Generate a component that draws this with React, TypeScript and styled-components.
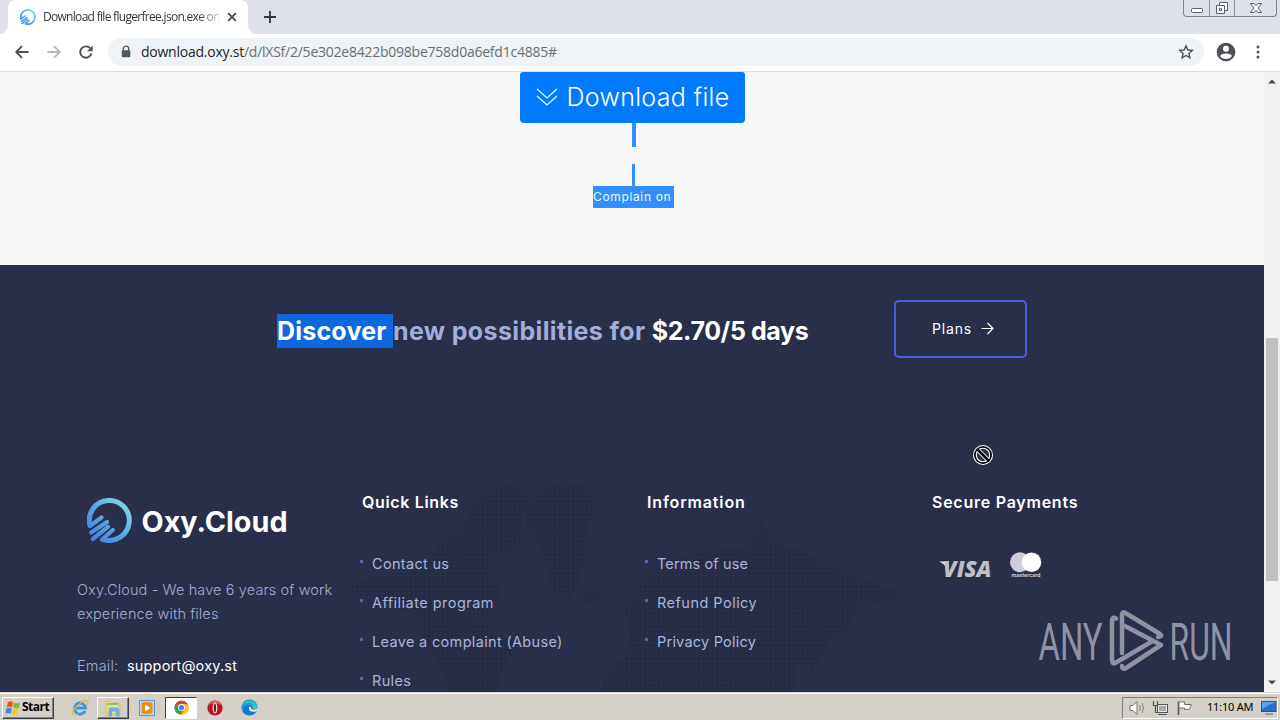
import React from "react";
import styled, { createGlobalStyle } from "styled-components";

const Global = createGlobalStyle`
  * { box-sizing: border-box; }
  body { margin: 0; width: 1280px; height: 720px; overflow: hidden; background: #f8f8f8; }
  svg { display: block; flex: none; }
`;

const brandFont = `Inter, "Liberation Sans", sans-serif`;
const uiFont = `"Open Sans", "Noto Sans", sans-serif`;

const Screen = styled.div`
  position: relative;
  display: flex;
  flex-direction: column;
  width: 1280px;
  height: 720px;
  overflow: hidden;
`;

/* Browser chrome */
const TabStrip = styled.div`
  display: flex;
  justify-content: space-between;
  height: 34px;
  flex: none;
  background: #dee1e8;
`;
const Tab = styled.div`
  position: relative;
  display: flex;
  align-items: center;
  width: 240px;
  height: 34px;
  margin-left: 8px;
  padding: 0 10px 0 12px;
  background: #fff;
  border-radius: 8px 8px 0 0;
  &::before, &::after {
    content: "";
    position: absolute;
    bottom: 0;
    width: 8px;
    height: 8px;
  }
  &::before { left: -8px; background: radial-gradient(circle at 0 0, #dee1e8 7.5px, #fff 8px); }
  &::after { right: -8px; background: radial-gradient(circle at 100% 0, #dee1e8 7.5px, #fff 8px); }
`;
const TabTitle = styled.div`
  width: 176px;
  margin: 0 8px 0 7px;
  overflow: hidden;
  white-space: nowrap;
  font: 12px/20px ${uiFont};
  letter-spacing: -0.7px;
  color: #33373b;
  mask-image: linear-gradient(to right, #000 155px, transparent 182px);
`;
const TabsLeft = styled.div`
  display: flex;
  align-items: center;
  gap: 15px;
`;
const WindowControls = styled.div`
  display: flex;
  width: 94px;
  height: 17px;
  margin-right: 3px;
  border: 1px solid #7d828b;
  border-top: 0;
  border-radius: 0 0 4px 4px;
`;
const Control = styled.div<{ $w: number }>`
  display: flex;
  justify-content: center;
  width: ${(p) => p.$w}px;
  border-right: 1px solid #9297a0;
  &:last-child { border-right: 0; }
`;
const Toolbar = styled.div`
  display: flex;
  align-items: center;
  height: 38px;
  flex: none;
  padding: 0 14px 2px 15px;
  background: #fff;
  border-bottom: 1px solid #dadddd;
`;
const NavButtons = styled.div`
  display: flex;
  gap: 18px;
  margin-right: 15px;
`;
const AddressBar = styled.div`
  display: flex;
  align-items: center;
  width: 1097px;
  height: 28px;
  padding: 0 10px 0 12px;
  border-radius: 14px;
  background: #f0f3f5;
`;
const Url = styled.div`
  flex: 1;
  margin-left: 9px;
  font: 14px/20px ${uiFont};
  letter-spacing: -0.24px;
  color: #6a6f74;
  white-space: nowrap;
  b { font-weight: 400; color: #202326; }
`;
const ToolbarEnd = styled.div`
  display: flex;
  align-items: center;
  gap: 14px;
  margin-left: 12px;
`;

/* Viewport */
const Viewport = styled.div`
  display: flex;
  flex: none;
  height: 620px;
`;
const Page = styled.main`
  display: flex;
  flex-direction: column;
  width: 1264px;
  height: 620px;
  overflow: hidden;
  font-family: ${brandFont};
`;
const Scrollbar = styled.div`
  display: flex;
  flex-direction: column;
  justify-content: space-between;
  align-items: center;
  width: 16px;
  padding: 7px 0;
  background: #f1f1f1;
`;
const Thumb = styled.div`
  width: 12px;
  height: 243px;
  margin-top: 154px;
  background: #c1c1c1;
`;

const DownloadArea = styled.section`
  display: flex;
  flex-direction: column;
  align-items: center;
  height: 193px;
  flex: none;
  background: #f8f8f8;
`;
const DownloadButton = styled.div`
  display: flex;
  align-items: center;
  width: 225px;
  height: 51px;
  padding: 0 0 2px 16px;
  gap: 9px;
  background: #007bff;
  border-radius: 3px 3px 4px 4px;
  color: #fff;
  font-size: 25px;
  font-weight: 300;
  letter-spacing: 0.32px;
  white-space: nowrap;
`;
const SelectionMark = styled.div<{ $h: number; $w: number; $gap?: number }>`
  width: ${(p) => p.$w}px;
  height: ${(p) => p.$h}px;
  margin: 0 0 ${(p) => p.$gap || 0}px 3px;
  background: #338fff;
`;
const Complain = styled.div`
  width: 81px;
  height: 22px;
  margin-left: 3px;
  background: #338fff;
  color: #e8f7ff;
  font-size: 12px;
  line-height: 22px;
  letter-spacing: 0.65px;
  white-space: nowrap;
`;

const Dark = styled.section`
  display: flex;
  flex-direction: column;
  position: relative;
  flex: 1;
  background: #292e4a;
`;
const Banner = styled.div`
  display: flex;
  align-items: center;
  justify-content: space-between;
  height: 58px;
  margin: 35px 237px 0 277px;
`;
const BannerText = styled.h2`
  margin: 0 0 -4px;
  font-size: 25px;
  line-height: 34px;
  font-weight: 700;
  letter-spacing: 0.36px;
  color: #a3addb;
  white-space: pre;
`;
const Selected = styled.span`
  display: inline-block;
  width: 116px;
  height: 34px;
  background: #0d68de;
  color: #fff;
  letter-spacing: 0.2px;
`;
const Price = styled.span`
  color: #fff;
  letter-spacing: -0.4px;
`;
const PlansButton = styled.div`
  display: flex;
  align-items: center;
  justify-content: center;
  gap: 9px;
  width: 133px;
  height: 58px;
  padding: 0 0 1px 5px;
  border: 2px solid #465fe0;
  border-radius: 5px;
  color: #fff;
  font-size: 14px;
  font-weight: 400;
  letter-spacing: 0.8px;
`;
const Footer = styled.footer`
  display: grid;
  grid-template-columns: repeat(4, 285px);
  margin: 132px 0 0 77px;
  height: 202px;
  overflow: hidden;
`;
const MapLayer = styled.div`
  position: absolute;
  left: 344px;
  top: 213px;
`;
const Column = styled.div`
  display: flex;
  flex-direction: column;
  position: relative;
`;
const Heading = styled.h3<{ $ls: number }>`
  margin: 1px 0 31px;
  font-size: 16px;
  line-height: 22px;
  font-weight: 600;
  letter-spacing: ${(p) => p.$ls}px;
  color: #fff;
  white-space: nowrap;
`;
const Links = styled.ul`
  margin: 0;
  padding: 0;
  list-style: none;
`;
const LinkItem = styled.li<{ $ls: number }>`
  display: flex;
  align-items: center;
  height: 39px;
  margin-left: -2px;
  font-size: 14.5px;
  letter-spacing: ${(p) => p.$ls}px;
  color: #a9b3dc;
  white-space: nowrap;
  &::before {
    content: "";
    width: 3px;
    height: 3px;
    margin: -4px 9px 0 0;
    background: #5566c8;
    border-radius: 1px;
  }
`;
const LogoRow = styled.div`
  margin: 8px 0 34px 10px;
`;
const Paragraph = styled.p<{ $ls: number; $top?: number }>`
  margin: ${(p) => p.$top || 0}px 0 0;
  font-size: 14.5px;
  line-height: 24px;
  font-weight: 300;
  letter-spacing: ${(p) => p.$ls}px;
  color: #a3add8;
  white-space: pre;
`;
const Mail = styled.span`
  color: #fff;
  font-weight: 400;
`;
const Cards = styled.div`
  display: flex;
  align-items: flex-end;
  gap: 18px;
  margin: 8px 0 0 6px;
`;

/* Taskbar */
const Taskbar = styled.div`
  display: flex;
  align-items: center;
  justify-content: space-between;
  height: 28px;
  flex: none;
  padding: 2px 2px 0 2px;
  background: #d4d0c8;
  border-top: 1px solid #d4d0c8;
  box-shadow: inset 0 1px 0 #fff;
`;
const Tasks = styled.div`
  display: flex;
  align-items: center;
`;
const TaskItem = styled.div<{ $w: number; $kind?: "raised" | "pressed"; $indent?: number }>`
  display: flex;
  align-items: center;
  justify-content: center;
  width: ${(p) => p.$w}px;
  height: 22px;
  padding-left: ${(p) => p.$indent || 0}px;
  border: ${(p) => (p.$kind ? "1px solid" : "0")};
  border-color: ${(p) => (p.$kind === "pressed" ? "#404040 #fff #fff #404040" : "#fff #404040 #404040 #fff")};
  background: ${(p) => (p.$kind === "pressed" ? "#fff" : "transparent")};
  box-shadow: ${(p) => (p.$kind === "raised" ? "inset -1px -1px 0 #808080" : "none")};
`;
const StartLabel = styled.span`
  margin: 0 2px 2px 1px;
  font: bold 12px/18px "Open Sans", "DejaVu Sans", sans-serif;
  letter-spacing: -0.5px;
  color: #000;
`;
const Tray = styled.div`
  display: flex;
  align-items: center;
  width: 156px;
  height: 22px;
  padding-left: 6px;
  border: 1px solid;
  border-color: #808080 #fff #fff #808080;
`;
const Clock = styled.span`
  width: 47px;
  margin: 0 7px 2px 14px;
  font: 11px/18px "Noto Sans", sans-serif;
  letter-spacing: -0.2px;
  white-space: nowrap;
  color: #000;
`;

const Floating = styled.div<{ $x: number; $y: number }>`
  position: absolute;
  left: ${(p) => p.$x}px;
  top: ${(p) => p.$y}px;
`;

const OxyMark = ({ size, id }: { size: number; id: string }) => (
  <svg width={size} height={size} viewBox="0 0 45 45">
    <defs>
      <linearGradient id={id} gradientUnits="userSpaceOnUse" x1="3" y1="42" x2="40" y2="5">
        <stop offset="0" stopColor="#3f80e0" />
        <stop offset="0.5" stopColor="#58a7e2" />
        <stop offset="1" stopColor="#7fd6e6" />
      </linearGradient>
    </defs>
    <g fill="none" stroke={`url(#${id})`} strokeLinecap="round" strokeLinejoin="round">
      <path d="M2.900 27.500A20 20 0 1 1 16.500 41.600" strokeWidth="5" />
      <path d="M3.500 27.500L14.500 19.500M4.200 34.500L20 24M5.800 41L21 28.800M15 41.500L25.800 32" strokeWidth="4.200" />
    </g>
  </svg>
);

const Logo = () => (
  <svg width="202" height="46" viewBox="0 0 202 46">
    <OxyMark size={45} id="oxyLarge" />
    <text x="54.5" y="33.5" fill="#fff" fontFamily="Inter" fontSize="29" fontWeight="700" textLength="146" lengthAdjust="spacingAndGlyphs">
      Oxy.Cloud
    </text>
  </svg>
);

const WorldMap = () => (
  <svg width="560" height="214" viewBox="344 478 560 214">
    <defs>
      <pattern id="dots" width="4.5" height="4.5" patternUnits="userSpaceOnUse">
        <rect width="3.3" height="3.3" rx="1" fill="#252943" />
      </pattern>
    </defs>
    <g fill="url(#dots)">
      <path d="M488 490L505 486L530 490L522 515L524 540L505 552L490 560L488 575L504 590L492 612L470 625L430 622L385 602L352 596L352 584L380 575L425 570L438 545L460 530L470 510Z" />
      <path d="M525 500L545 488L565 482L586 486L596 498L588 530L582 570L570 602L555 594L546 565L540 545L526 530Z" />
      <path d="M420 622L492 624L516 648L504 670L494 692L452 692L440 668L425 645Z" />
      <path d="M586 590L602 592L600 604L584 602Z" />
      <path d="M624 606L640 585L662 562L700 552L745 548L762 528L754 512L762 516L772 542L806 554L850 574L898 592L894 604L858 606L846 636L836 632L826 650L812 674L800 662L792 692L602 692L606 672L632 652Z" />
    </g>
  </svg>
);

const Visa = () => (
  <svg width="54" height="17" viewBox="0 0 54 17">
    <path d="M1 0.5H8.5L11 5L9 7Q6 2.5 1 0.5Z" fill="#e9e9ec" />
    <text x="5" y="16" fill="#bfc0c2" fontFamily="Open Sans" fontStyle="italic" fontWeight="800" fontSize="22" textLength="48.5" lengthAdjust="spacingAndGlyphs">
      VISA
    </text>
  </svg>
);

const Mastercard = () => (
  <svg width="32" height="26" viewBox="0 0 32 26">
    <circle cx="10" cy="10.3" r="10" fill="#cfced6" />
    <circle cx="21.5" cy="10.3" r="9.8" fill="#fff" />
    <text x="1.5" y="25" fill="#d4d5dc" fontFamily="Inter" fontWeight="700" fontSize="5" textLength="29">mastercard</text>
  </svg>
);

const AnyRun = () => (
  <svg width="196" height="64" viewBox="0 0 196 64">
    <g fill="#9092a1" fontFamily="Roboto" fontSize="52" fontWeight="400">
      <text x="0.5" y="50.5" textLength="64" lengthAdjust="spacingAndGlyphs">ANY</text>
      <text x="131.5" y="50.5" textLength="63" lengthAdjust="spacingAndGlyphs">RUN</text>
    </g>
    <g fill="none" stroke="#9092a1" strokeWidth="4.500" strokeLinejoin="round" strokeLinecap="round">
      <path d="M78 9.500Q74 7 74 12V51Q74 56 78 53.500L113 33" />
      <path d="M84 44V6Q84 2 87.500 4L122 25Q125 27.500 120 28" />
      <path d="M87 17L123 36L88 59Q84 61 84 57" />
    </g>
  </svg>
);

const NoCursor = () => (
  <svg width="22" height="22" viewBox="0 0 22 22">
    <circle cx="11" cy="11" r="10" fill="#fff" />
    <circle cx="11" cy="11" r="9" fill="#000" />
    <circle cx="11" cy="11" r="6.700" fill="#292e4a" stroke="#fff" strokeWidth="1.100" />
    <path d="M6 6L16 16" stroke="#fff" strokeWidth="4.500" />
    <path d="M5.500 5.500L16.500 16.500" stroke="#000" strokeWidth="2.500" />
  </svg>
);

const IeIcon = () => (
  <svg width="18" height="18" viewBox="0 0 18 18">
    <path d="M14 12A5.500 5.500 0 1 1 14.500 9H4" fill="none" stroke="#359bdc" strokeWidth="3" />
    <path d="M2 16C-1 12 12 0 16.500 2Q18 3 15.500 6M2 16Q4 17 7 15" fill="none" stroke="#e6b93d" strokeWidth="1.300" />
  </svg>
);
const FolderIcon = () => (
  <svg width="18" height="18" viewBox="0 0 18 18">
    <path d="M2 5V2H7L8.500 4H15V7H16V15H2Z" fill="#f1dc86" stroke="#c9ac57" strokeWidth="0.700" />
    <path d="M3 5H14" stroke="#62b884" strokeWidth="1.500" />
    <path d="M5 17V11Q5 9 7 9H13Q15 9 15 11V17H12.500V12H7.500V17Z" fill="#72bbe8" stroke="#3c8cc1" strokeWidth="0.500" />
  </svg>
);
const MediaIcon = () => (
  <svg width="16" height="16" viewBox="0 0 16 16">
    <rect x="0.500" y="0.500" width="15" height="15" fill="#b6d8ee" stroke="#5a9bce" />
    <rect x="2.500" y="2" width="11" height="12" rx="3" fill="#ef8b17" />
    <path d="M6 4.500L11.500 8L6 11.500Z" fill="#fff" />
  </svg>
);
const ChromeIcon = () => (
  <svg width="15" height="15" viewBox="0 0 16 16">
    <circle cx="8" cy="8" r="7.500" fill="#dd4335" />
    <path d="M8 8L1.500 4.200A7.500 7.500 0 0 0 7.700 15.500L11.500 9.500Z" fill="#36a152" />
    <path d="M8 4.500H14.700A7.500 7.500 0 0 1 7.500 15.500L11.200 9.500Z" fill="#fbc21c" />
    <circle cx="8" cy="8" r="3.700" fill="#fff" />
    <circle cx="8" cy="8" r="2.800" fill="#4383ec" />
  </svg>
);
const OperaIcon = () => (
  <svg width="16" height="16" viewBox="0 0 16 16">
    <circle cx="8" cy="8" r="7.600" fill="#bb1420" />
    <path d="M2 5Q4 1 8 1T14 5Q11 3 8 3T2 5Z" fill="#e66c70" />
    <ellipse cx="8" cy="8" rx="2.400" ry="5.500" fill="#f3e3e3" />
    <ellipse cx="8" cy="8" rx="1.100" ry="4.500" fill="#8c0d14" />
  </svg>
);
const EdgeIcon = () => (
  <svg width="17" height="17" viewBox="0 0 17 17">
    <circle cx="8.500" cy="8.500" r="8" fill="#1877cf" />
    <path d="M0.700 8A8 8 0 0 1 16.500 8Q16 12 11 11Q12 7 8 6Q3 5 0.700 8Z" fill="#39c3b6" />
    <path d="M0.700 8Q3 3 9 4Q13 6 11 9Q8 5 4 7Q1 9 3 14Q0 11 0.700 8Z" fill="#2196da" />
    <path d="M8 8Q7 14 15 12.500L16.500 10.500L17 8.500Q15 12 11 10.500Q9.500 10 10 8Z" fill="#e4ecea" />
  </svg>
);
const WindowsFlag = () => (
  <svg width="16" height="16" viewBox="0 0 16 16">
    <path d="M3 2Q5.500 0.500 8 2L7 7.300Q4.500 6 1.700 7.300Z" fill="#e8572b" />
    <path d="M9 2.400Q12 4 15 2.600L13.800 8Q11 9 8 7.600Z" fill="#83b93b" />
    <path d="M1.500 8.300Q4.500 7 6.900 8.400L5.800 13.700Q3 12.300 0.300 13.600Z" fill="#3f8ed8" />
    <path d="M7.800 8.800Q10.500 10 13.600 9L12.400 14.200Q9.500 15.500 6.700 14Z" fill="#f6c42c" />
  </svg>
);

const quickLinks: [string, number][] = [
  ["Contact us", 0.32],
  ["Affiliate program", 0.47],
  ["Leave a complaint (Abuse)", 0.33],
  ["Rules", 0.35],
];
const infoLinks: [string, number][] = [
  ["Terms of use", 0.12],
  ["Refund Policy", 0.47],
  ["Privacy Policy", 0.22],
];

export default function App() {
  return (
    <Screen>
      <Global />
      <TabStrip>
        <TabsLeft>
          <Tab>
            <OxyMark size={16} id="oxySmall" />
            <TabTitle>Download file flugerfree.json.exe on</TabTitle>
            <svg width="10" height="10" viewBox="0 0 10 10">
              <path d="M1.200 1.200L8.800 8.800M8.800 1.200L1.200 8.800" stroke="#3c4043" strokeWidth="1.700" />
            </svg>
          </Tab>
          <svg width="14" height="14" viewBox="0 0 14 14">
            <path d="M7 1V13M1 7H13" stroke="#33373c" strokeWidth="1.800" />
          </svg>
        </TabsLeft>
        <WindowControls>
          <Control $w={26}>
            <svg width="14" height="16" viewBox="0 0 14 16">
              <rect x="1.500" y="8.500" width="11" height="4" rx="1" fill="#fff" stroke="#5a5f6b" />
            </svg>
          </Control>
          <Control $w={25}>
            <svg width="14" height="16" viewBox="0 0 14 16">
              <path d="M4.500 2.500H12.500V10.500H9.500V13.500H1.500V5.500H4.500Z" fill="#fff" stroke="#5a5f6b" />
              <path d="M4.500 5.500H9.500V10.500M4.500 8.500H6.500V10.500H4.500Z" fill="none" stroke="#5a5f6b" />
            </svg>
          </Control>
          <Control $w={41}>
            <svg width="14" height="16" viewBox="0 0 14 16">
              <path d="M1.500 3.500H5L7 5.800L9 3.500H12.500L9 8L12.500 12.500H9L7 10.200L5 12.500H1.500L5 8Z" fill="#fff" stroke="#5a5f6b" />
            </svg>
          </Control>
        </WindowControls>
      </TabStrip>
      <Toolbar>
        <NavButtons>
          <svg width="14" height="14" viewBox="0 0 14 14">
            <path d="M13.500 7H1.500M7 1.200L1.200 7L7 12.800" fill="none" stroke="#4d5155" strokeWidth="1.800" />
          </svg>
          <svg width="14" height="14" viewBox="0 0 14 14">
            <path d="M0.500 7H12.500M7 1.200L12.800 7L7 12.800" fill="none" stroke="#b5b7b9" strokeWidth="1.800" />
          </svg>
          <svg width="14" height="14" viewBox="0 0 14 14">
            <path d="M12.500 8.500A5.700 5.700 0 1 1 11.200 3.200" fill="none" stroke="#4d5155" strokeWidth="1.900" />
            <path d="M13.700 0.500V6.200H8Z" fill="#4d5155" />
          </svg>
        </NavButtons>
        <AddressBar>
          <svg width="12" height="14" viewBox="0 0 12 14">
            <path d="M3.300 6V3.800A2.600 2.600 0 0 1 8.700 3.800V6" fill="none" stroke="#55595d" strokeWidth="1.400" />
            <rect x="1.800" y="5.300" width="8.500" height="7" rx="1" fill="#55595d" />
          </svg>
          <Url>
            <b>download.oxy.st</b>/d/lXSf/2/5e302e8422b098be758d0a6efd1c4885#
          </Url>
          <svg width="16" height="16" viewBox="0 0 16 16">
            <path d="M8 1.800L9.800 6L14.300 6.400L10.900 9.400L11.900 13.800L8 11.500L4.100 13.800L5.100 9.400L1.700 6.400L6.200 6Z" fill="none" stroke="#4d5155" strokeWidth="1.400" />
          </svg>
        </AddressBar>
        <ToolbarEnd>
          <svg width="20" height="20" viewBox="0 0 20 20">
            <circle cx="10" cy="10" r="9.300" fill="#4d5155" />
            <circle cx="10" cy="6.800" r="3" fill="#fff" />
            <path d="M4 14Q5 11.500 10 11.500T16 14Q14 17 10 17T4 14Z" fill="#fff" />
          </svg>
          <svg width="16" height="16" viewBox="0 0 16 16" fill="#4d5155">
            <circle cx="8" cy="3" r="1.500" />
            <circle cx="8" cy="8" r="1.500" />
            <circle cx="8" cy="13" r="1.500" />
          </svg>
        </ToolbarEnd>
      </Toolbar>

      <Viewport>
        <Page>
          <DownloadArea>
            <DownloadButton>
              <svg width="22" height="20" viewBox="0 0 22 20">
                <path d="M1 2L11 11L21 2M1 9L11 18L21 9" fill="none" stroke="#e6faff" strokeWidth="1.300" />
              </svg>
              Download file
            </DownloadButton>
            <SelectionMark $w={4} $h={24} $gap={17} />
            <SelectionMark $w={3} $h={22} />
            <Complain>Complain on</Complain>
          </DownloadArea>
          <Dark>
            <MapLayer>
              <WorldMap />
            </MapLayer>
            <Banner>
              <BannerText>
                <Selected>Discover</Selected>new possibilities for <Price>$2.70/5 days</Price>
              </BannerText>
              <PlansButton>
                Plans
                <svg width="13" height="13" viewBox="0 0 13 13">
                  <path d="M0.500 6.500H12M6.500 1L12 6.500L6.500 12" fill="none" stroke="#fff" strokeWidth="1.200" />
                </svg>
              </PlansButton>
            </Banner>
            <Footer>
              <Column>
                <LogoRow>
                  <Logo />
                </LogoRow>
                <Paragraph $ls={0.12}>{"Oxy.Cloud - We have 6 years of work\nexperience with files"}</Paragraph>
                <Paragraph $ls={0.2} $top={28}>
                  {"Email:  "}
                  <Mail>support@oxy.st</Mail>
                </Paragraph>
              </Column>
              <Column>
                <Heading $ls={0.65}>Quick Links</Heading>
                <Links>
                  {quickLinks.map(([t, ls]) => (
                    <LinkItem key={t} $ls={ls}>{t}</LinkItem>
                  ))}
                </Links>
              </Column>
              <Column>
                <Heading $ls={0.85}>Information</Heading>
                <Links>
                  {infoLinks.map(([t, ls]) => (
                    <LinkItem key={t} $ls={ls}>{t}</LinkItem>
                  ))}
                </Links>
              </Column>
              <Column>
                <Heading $ls={0.75}>Secure Payments</Heading>
                <Cards>
                  <Visa />
                  <Mastercard />
                </Cards>
              </Column>
            </Footer>
          </Dark>
        </Page>
        <Scrollbar>
          <svg width="8" height="5" viewBox="0 0 8 5">
            <path d="M0 4.500L4 0.500L8 4.500Z" fill="#4b4b4b" />
          </svg>
          <Thumb />
          <svg width="8" height="5" viewBox="0 0 8 5">
            <path d="M0 0.500L4 4.500L8 0.500Z" fill="#4b4b4b" />
          </svg>
        </Scrollbar>
      </Viewport>

      <Taskbar>
        <Tasks>
          <TaskItem $w={52} $kind="raised">
            <WindowsFlag />
            <StartLabel>Start</StartLabel>
          </TaskItem>
          <TaskItem $w={43} $indent={8}><IeIcon /></TaskItem>
          <TaskItem $w={32} $kind="raised"><FolderIcon /></TaskItem>
          <TaskItem $w={36}><MediaIcon /></TaskItem>
          <TaskItem $w={32} $kind="pressed"><ChromeIcon /></TaskItem>
          <TaskItem $w={34} $indent={2}><OperaIcon /></TaskItem>
          <TaskItem $w={34} $indent={2}><EdgeIcon /></TaskItem>
        </Tasks>
        <Tray>
          <svg width="17" height="16" viewBox="0 0 17 16">
            <path d="M1 5.500H4L8 1.500V14.500L4 10.500H1Z" fill="#fff" stroke="#707070" />
            <path d="M10.500 5Q12 8 10.500 11M13 3Q16 8 13 13" fill="none" stroke="#808080" />
          </svg>
          <svg width="24" height="16" viewBox="-6 0 24 16">
            <rect x="5.500" y="4.500" width="10" height="8" fill="#e8e8e8" stroke="#555" />
            <rect x="7" y="6" width="7" height="5" fill="#aaa" />
            <path d="M6 14.500H15M1.500 1V5.500H5.500V1M3.500 5.500V12.500H6" fill="none" stroke="#555" strokeWidth="1.200" />
          </svg>
          <svg width="23" height="16" viewBox="-6 0 23 16">
            <path d="M2.500 15V1.500" stroke="#555" strokeWidth="1.600" />
            <path d="M3 2H8.500V4.500H15.500L13 9.500H8.500V8H3Z" fill="#fff" stroke="#707070" />
          </svg>
          <Clock>11:10 AM</Clock>
          <svg width="16" height="14" viewBox="0 0 16 14">
            <rect x="0.500" y="0.500" width="14.500" height="10" fill="#2c6fcb" stroke="#24549a" />
            <path d="M1 1H14L1 8Z" fill="#5fa1e8" />
            <path d="M4 13H12" stroke="#7a8ca5" strokeWidth="1.500" />
          </svg>
        </Tray>
      </Taskbar>

      <Floating $x={972} $y={444}>
        <NoCursor />
      </Floating>
      <Floating $x={1038} $y={609}>
        <AnyRun />
      </Floating>
    </Screen>
  );
}
